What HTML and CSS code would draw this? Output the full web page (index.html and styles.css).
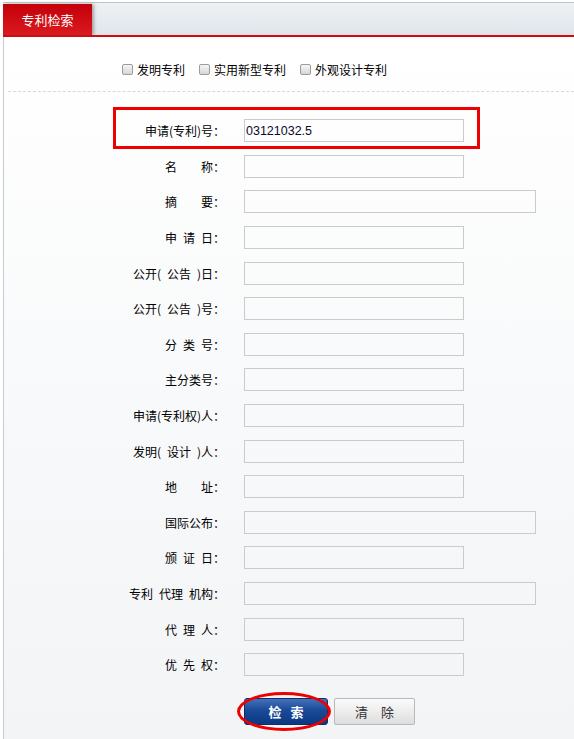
FILE: index.html
```html
<!DOCTYPE html>
<html lang="zh-CN">
<head>
<meta charset="utf-8">
<title>专利检索</title>
<link rel="stylesheet" href="styles.css">
</head>
<body>
<div class="wrap">
  <div class="tabbar">
    <div class="tab">专利检索</div>
  </div>
  <div class="content">
    <div class="types">
      <label class="type"><span class="cb"></span>发明专利</label>
      <label class="type"><span class="cb"></span>实用新型专利</label>
      <label class="type"><span class="cb"></span>外观设计专利</label>
    </div>
    <div class="dash"></div>
    <form class="form">
      <div class="row hl-row">
        <div class="lbl">申请(专利)号：</div>
        <input class="inp" type="text" value="03121032.5">
        <div class="hl"></div>
      </div>
      <div class="row"><div class="lbl">名&emsp;&emsp;称：</div><input class="inp" type="text"></div>
      <div class="row"><div class="lbl">摘&emsp;&emsp;要：</div><input class="inp wide" type="text"></div>
      <div class="row"><div class="lbl">申&ensp;请&ensp;日：</div><input class="inp" type="text"></div>
      <div class="row"><div class="lbl">公开(&ensp;公告&ensp;)日：</div><input class="inp" type="text"></div>
      <div class="row"><div class="lbl">公开(&ensp;公告&ensp;)号：</div><input class="inp" type="text"></div>
      <div class="row"><div class="lbl">分&ensp;类&ensp;号：</div><input class="inp" type="text"></div>
      <div class="row"><div class="lbl">主分类号：</div><input class="inp" type="text"></div>
      <div class="row"><div class="lbl">申请(专利权)人：</div><input class="inp" type="text"></div>
      <div class="row"><div class="lbl">发明(&ensp;设计&ensp;)人：</div><input class="inp" type="text"></div>
      <div class="row"><div class="lbl">地&emsp;&emsp;址：</div><input class="inp" type="text"></div>
      <div class="row"><div class="lbl">国际公布：</div><input class="inp wide" type="text"></div>
      <div class="row"><div class="lbl">颁&ensp;证&ensp;日：</div><input class="inp" type="text"></div>
      <div class="row"><div class="lbl">专利&ensp;代理&ensp;机构：</div><input class="inp wide" type="text"></div>
      <div class="row"><div class="lbl">代&ensp;理&ensp;人：</div><input class="inp" type="text"></div>
      <div class="row"><div class="lbl">优&ensp;先&ensp;权：</div><input class="inp" type="text"></div>
      <div class="btns">
        <div class="btn-wrap">
          <button type="button" class="btn btn-search">检 索</button>
          <div class="ellipse"></div>
        </div>
        <button type="reset" class="btn btn-clear">清 除</button>
      </div>
    </form>
  </div>
</div>
</body>
</html>
```

FILE: styles.css
```css
html, body {
  margin: 0;
  padding: 0;
  background: #ffffff;
}
body {
  font-family: "Noto Sans CJK SC", "Liberation Sans", sans-serif;
  font-size: 12px;
  color: #000;
}
.wrap {
  margin: 2px 0 0 3px;
  height: 737px;
  display: flex;
  flex-direction: column;
}
.tabbar {
  height: 32px;
  border-top: 1px solid #bcc6ce;
  border-bottom: 2px solid #d30a0a;
  background: linear-gradient(#eef1f3, #dfe5ec);
  display: flex;
  align-items: flex-end;
}
.tab {
  width: 89px;
  height: 31px;
  background: linear-gradient(#c4000a, #da1a1f);
  color: #fff;
  font-size: 13px;
  line-height: 31px;
  text-align: center;
  box-shadow: 2px 0 3px rgba(80, 80, 80, 0.45);
}
.content {
  flex: 1;
  border-left: 1px solid #c5ccd3;
  background: linear-gradient(#ffffff, #f2f4f6);
  padding-top: 24px;
}
.types {
  display: flex;
  align-items: center;
  height: 16px;
  padding-left: 118px;
}
.type {
  display: flex;
  align-items: center;
  margin-right: 14px;
  color: #000;
}
.cb {
  width: 11px;
  height: 11px;
  box-sizing: border-box;
  border: 1px solid #9c9c9c;
  border-radius: 2px;
  background: linear-gradient(#f6f6f6, #d6d6d6);
  margin-right: 4px;
}
.dash {
  margin: 14px 0 0 4px;
  border-top: 1px dashed #d8d8d8;
}
.form {
  margin: 21px 0 0 0;
}
.row {
  display: flex;
  align-items: center;
  height: 35.6px;
}
.hl-row {
  position: relative;
}
.lbl {
  width: 221px;
  text-align: right;
  margin-right: 19px;
  white-space: nowrap;
  color: #000;
}
.inp {
  width: 220px;
  height: 23px;
  box-sizing: border-box;
  border: 1px solid #cbcbcb;
  background: transparent;
  padding: 0 1px;
  margin: 0;
  font-family: "Liberation Sans", sans-serif;
  font-size: 12.5px;
  color: #0a0a2a;
  outline: none;
}
.inp.wide {
  width: 292px;
}
.hl {
  position: absolute;
  left: 109px;
  top: -6px;
  width: 367px;
  height: 42px;
  box-sizing: border-box;
  border: 3px solid #ee0000;
  pointer-events: none;
}
.btns {
  display: flex;
  align-items: center;
  padding-left: 240px;
  margin-top: 15px;
  gap: 6px;
}
.btn-wrap {
  position: relative;
  display: flex;
}
.btn {
  height: 27px;
  box-sizing: border-box;
  font-family: "Noto Sans CJK SC", sans-serif;
  padding: 0;
  margin: 0;
  cursor: pointer;
}
.btn-search {
  width: 84px;
  border: 1px solid #0a2e6e;
  border-radius: 3px;
  background: linear-gradient(#4471bb, #1a4a98 45%, #0c3882);
  color: #fff;
  font-size: 13px;
  font-weight: bold;
  letter-spacing: 3px;
  text-indent: 3px;
}
.ellipse {
  position: absolute;
  left: -7px;
  top: -6px;
  width: 94px;
  height: 39px;
  box-sizing: border-box;
  border: 3px solid #ee0000;
  border-radius: 50%;
  pointer-events: none;
}
.btn-clear {
  width: 81px;
  border: 1px solid #b8b8b8;
  border-radius: 2px;
  background: linear-gradient(#fbfbfb, #dedede);
  color: #333;
  font-size: 13px;
  letter-spacing: 5px;
  text-indent: 5px;
}
```
